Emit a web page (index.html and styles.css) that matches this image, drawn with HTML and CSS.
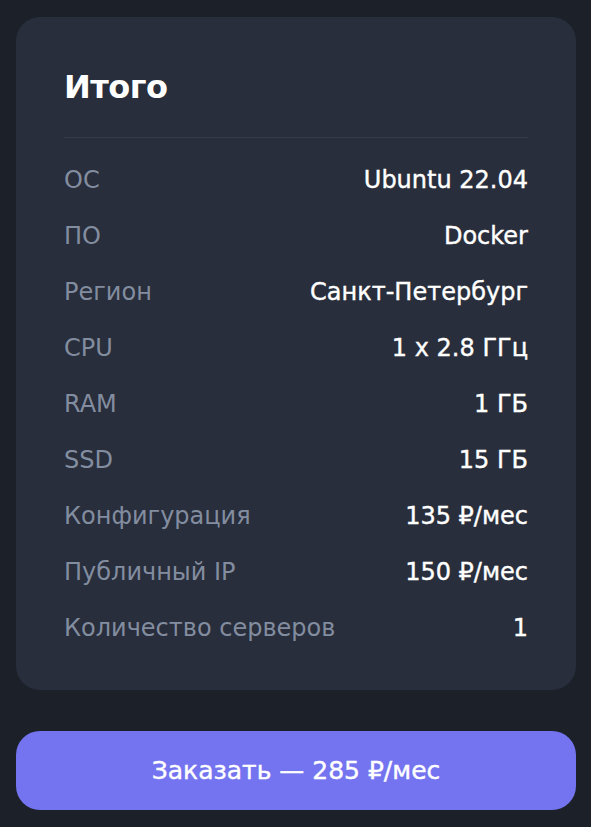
FILE: index.html
```html
<!DOCTYPE html>
<html lang="ru">
<head>
<meta charset="utf-8">
<title>Итого</title>
<link rel="stylesheet" href="styles.css">
</head>
<body>
<main class="page">
  <section class="summary">
    <h2 class="summary-title">Итого</h2>
    <div class="divider"></div>
    <dl class="rows">
      <div class="row"><dt>ОС</dt><dd>Ubuntu 22.04</dd></div>
      <div class="row"><dt>ПО</dt><dd>Docker</dd></div>
      <div class="row"><dt>Регион</dt><dd>Санкт-Петербург</dd></div>
      <div class="row"><dt>CPU</dt><dd>1 x 2.8 ГГц</dd></div>
      <div class="row"><dt>RAM</dt><dd>1 ГБ</dd></div>
      <div class="row"><dt>SSD</dt><dd>15 ГБ</dd></div>
      <div class="row"><dt>Конфигурация</dt><dd>135 ₽/мес</dd></div>
      <div class="row"><dt>Публичный IP</dt><dd>150 ₽/мес</dd></div>
      <div class="row"><dt>Количество серверов</dt><dd>1</dd></div>
    </dl>
  </section>
  <button class="order-btn" type="button">Заказать — 285 ₽/мес</button>
</main>
</body>
</html>
```

FILE: styles.css
```css
* { box-sizing: border-box; }
html, body {
  margin: 0;
  padding: 0;
  background: #1b2029;
}
body {
  font-family: "DejaVu Sans", "Noto Sans", sans-serif;
  color: #ffffff;
}
.page {
  padding: 17px 15px 16px 16px;
  display: flex;
  flex-direction: column;
  gap: 41px;
}
.summary {
  background: #282e3b;
  border-radius: 24px;
  padding: 50px 48px 34px 48px;
}
.summary-title {
  margin: 0;
  font-size: 32px;
  line-height: 40px;
  font-weight: 700;
  letter-spacing: -0.5px;
}
.divider {
  height: 1px;
  background: #343b49;
  margin-top: 30px;
}
.rows {
  margin: 14px 0 0 0;
  display: flex;
  flex-direction: column;
}
.row {
  height: 56px;
  display: flex;
  align-items: center;
  justify-content: space-between;
  font-size: 24px;
}
.row dt {
  color: #838da0;
  font-weight: 400;
}
.row dd {
  margin: 0;
  color: #ffffff;
  font-weight: 400;
  -webkit-text-stroke: 0.4px #ffffff;
}
.order-btn {
  height: 79px;
  width: 100%;
  border: 0;
  border-radius: 24px;
  background: #7474f0;
  color: #ffffff;
  font-family: inherit;
  font-size: 25px;
  font-weight: 400;
  -webkit-text-stroke: 0.4px #ffffff;
}
```
